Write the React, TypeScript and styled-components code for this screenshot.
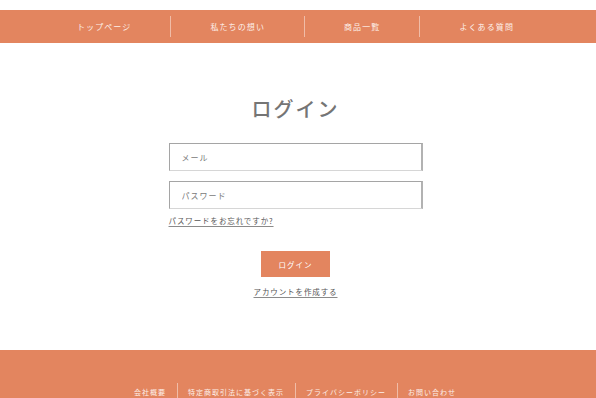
import styled, { createGlobalStyle } from "styled-components"

const GlobalStyle = createGlobalStyle`
    body{
        margin: 0;
        background: #ffffff;
        font-family: "Noto Sans CJK JP", "Noto Sans", sans-serif;
    }
`

const navItems = ["トップページ", "私たちの想い", "商品一覧", "よくある質問"]
const footerItems = ["会社概要", "特定商取引法に基づく表示", "プライバシーポリシー", "お問い合わせ"]

const App = () => {
    return(
        <Page>
            <GlobalStyle />
            <Header>
                <Nav>
                    {navItems.map((item, i) => (
                        <NavItem key={item} $first={i === 0}>{item}</NavItem>
                    ))}
                </Nav>
            </Header>
            <Main>
                <Title>ログイン</Title>
                <Form>
                    <Input placeholder="メール" />
                    <Input type="password" placeholder="パスワード" />
                    <Forgot href="#">パスワードをお忘れですか?</Forgot>
                </Form>
                <Button>ログイン</Button>
                <Create href="#">アカウントを作成する</Create>
            </Main>
            <Footer>
                <FooterNav>
                    {footerItems.map((item, i) => (
                        <FooterItem key={item} $first={i === 0}>{item}</FooterItem>
                    ))}
                </FooterNav>
            </Footer>
        </Page>
    )
}

const orange = "#e3855f"

const Page = styled.div`
    padding-top: 10px;
    height: 398px;
    box-sizing: border-box;
    overflow: hidden;
`
const Header = styled.header`
    height: 33px;
    background: ${orange};
    display: flex;
    align-items: center;
    justify-content: center;
    padding-right: 5px;
`
const Nav = styled.nav`
    display: flex;
    align-items: center;
`
const NavItem = styled.a<{ $first?: boolean }>`
    padding: 0 39px;
    height: 21px;
    line-height: 21px;
    font-size: 8px;
    letter-spacing: 1.1px;
    color: #fdf0ea;
    border-left: ${p => p.$first ? "none" : "1px solid rgba(255,255,255,0.45)"};
`
const Main = styled.main`
    height: 307px;
    display: flex;
    flex-direction: column;
    align-items: center;
    padding-right: 5px;
`
const Title = styled.h1`
    margin: 54px 0 0;
    font-size: 20px;
    line-height: 24px;
    font-weight: 500;
    letter-spacing: 2px;
    color: #757575;
`
const Form = styled.div`
    width: 254px;
    margin-top: 22px;
    display: flex;
    flex-direction: column;
    gap: 10px;
`
const Input = styled.input`
    box-sizing: border-box;
    width: 100%;
    height: 28px;
    padding: 0 12px;
    border: 1px solid #a5a5a5;
    border-bottom-color: #d6d6d6;
    border-right: 2px solid #b2b2b2;
    font-family: inherit;
    font-size: 8px;
    letter-spacing: 1px;
    outline: none;
    &::placeholder{
        color: #7a7a7a;
    }
`
const linkStyle = `
    font-size: 7.5px;
    line-height: 12px;
    letter-spacing: 0.9px;
    color: #555555;
    text-decoration: underline;
    text-decoration-color: #8a8a8a;
    text-underline-offset: 2px;
`
const Forgot = styled.a`
    ${linkStyle}
    align-self: flex-start;
    margin-top: -4px;
`
const Button = styled.button`
    margin-top: 24px;
    width: 69px;
    height: 26px;
    border: none;
    background: ${orange};
    color: #ffffff;
    font-family: inherit;
    font-size: 7.5px;
    letter-spacing: 1px;
    cursor: pointer;
`
const Create = styled.a`
    ${linkStyle}
    margin-top: 9px;
`
const Footer = styled.footer`
    height: 60px;
    background: ${orange};
    padding-top: 33px;
    display: flex;
    justify-content: center;
    padding-right: 5px;
`
const FooterNav = styled.nav`
    display: flex;
    align-items: flex-start;
`
const FooterItem = styled.a<{ $first?: boolean }>`
    padding: 0 11px 0 10px;
    height: 18px;
    line-height: 18px;
    font-size: 7px;
    letter-spacing: 1px;
    color: #fdf0ea;
    border-left: ${p => p.$first ? "none" : "1px solid rgba(255,255,255,0.45)"};
`

export default App
